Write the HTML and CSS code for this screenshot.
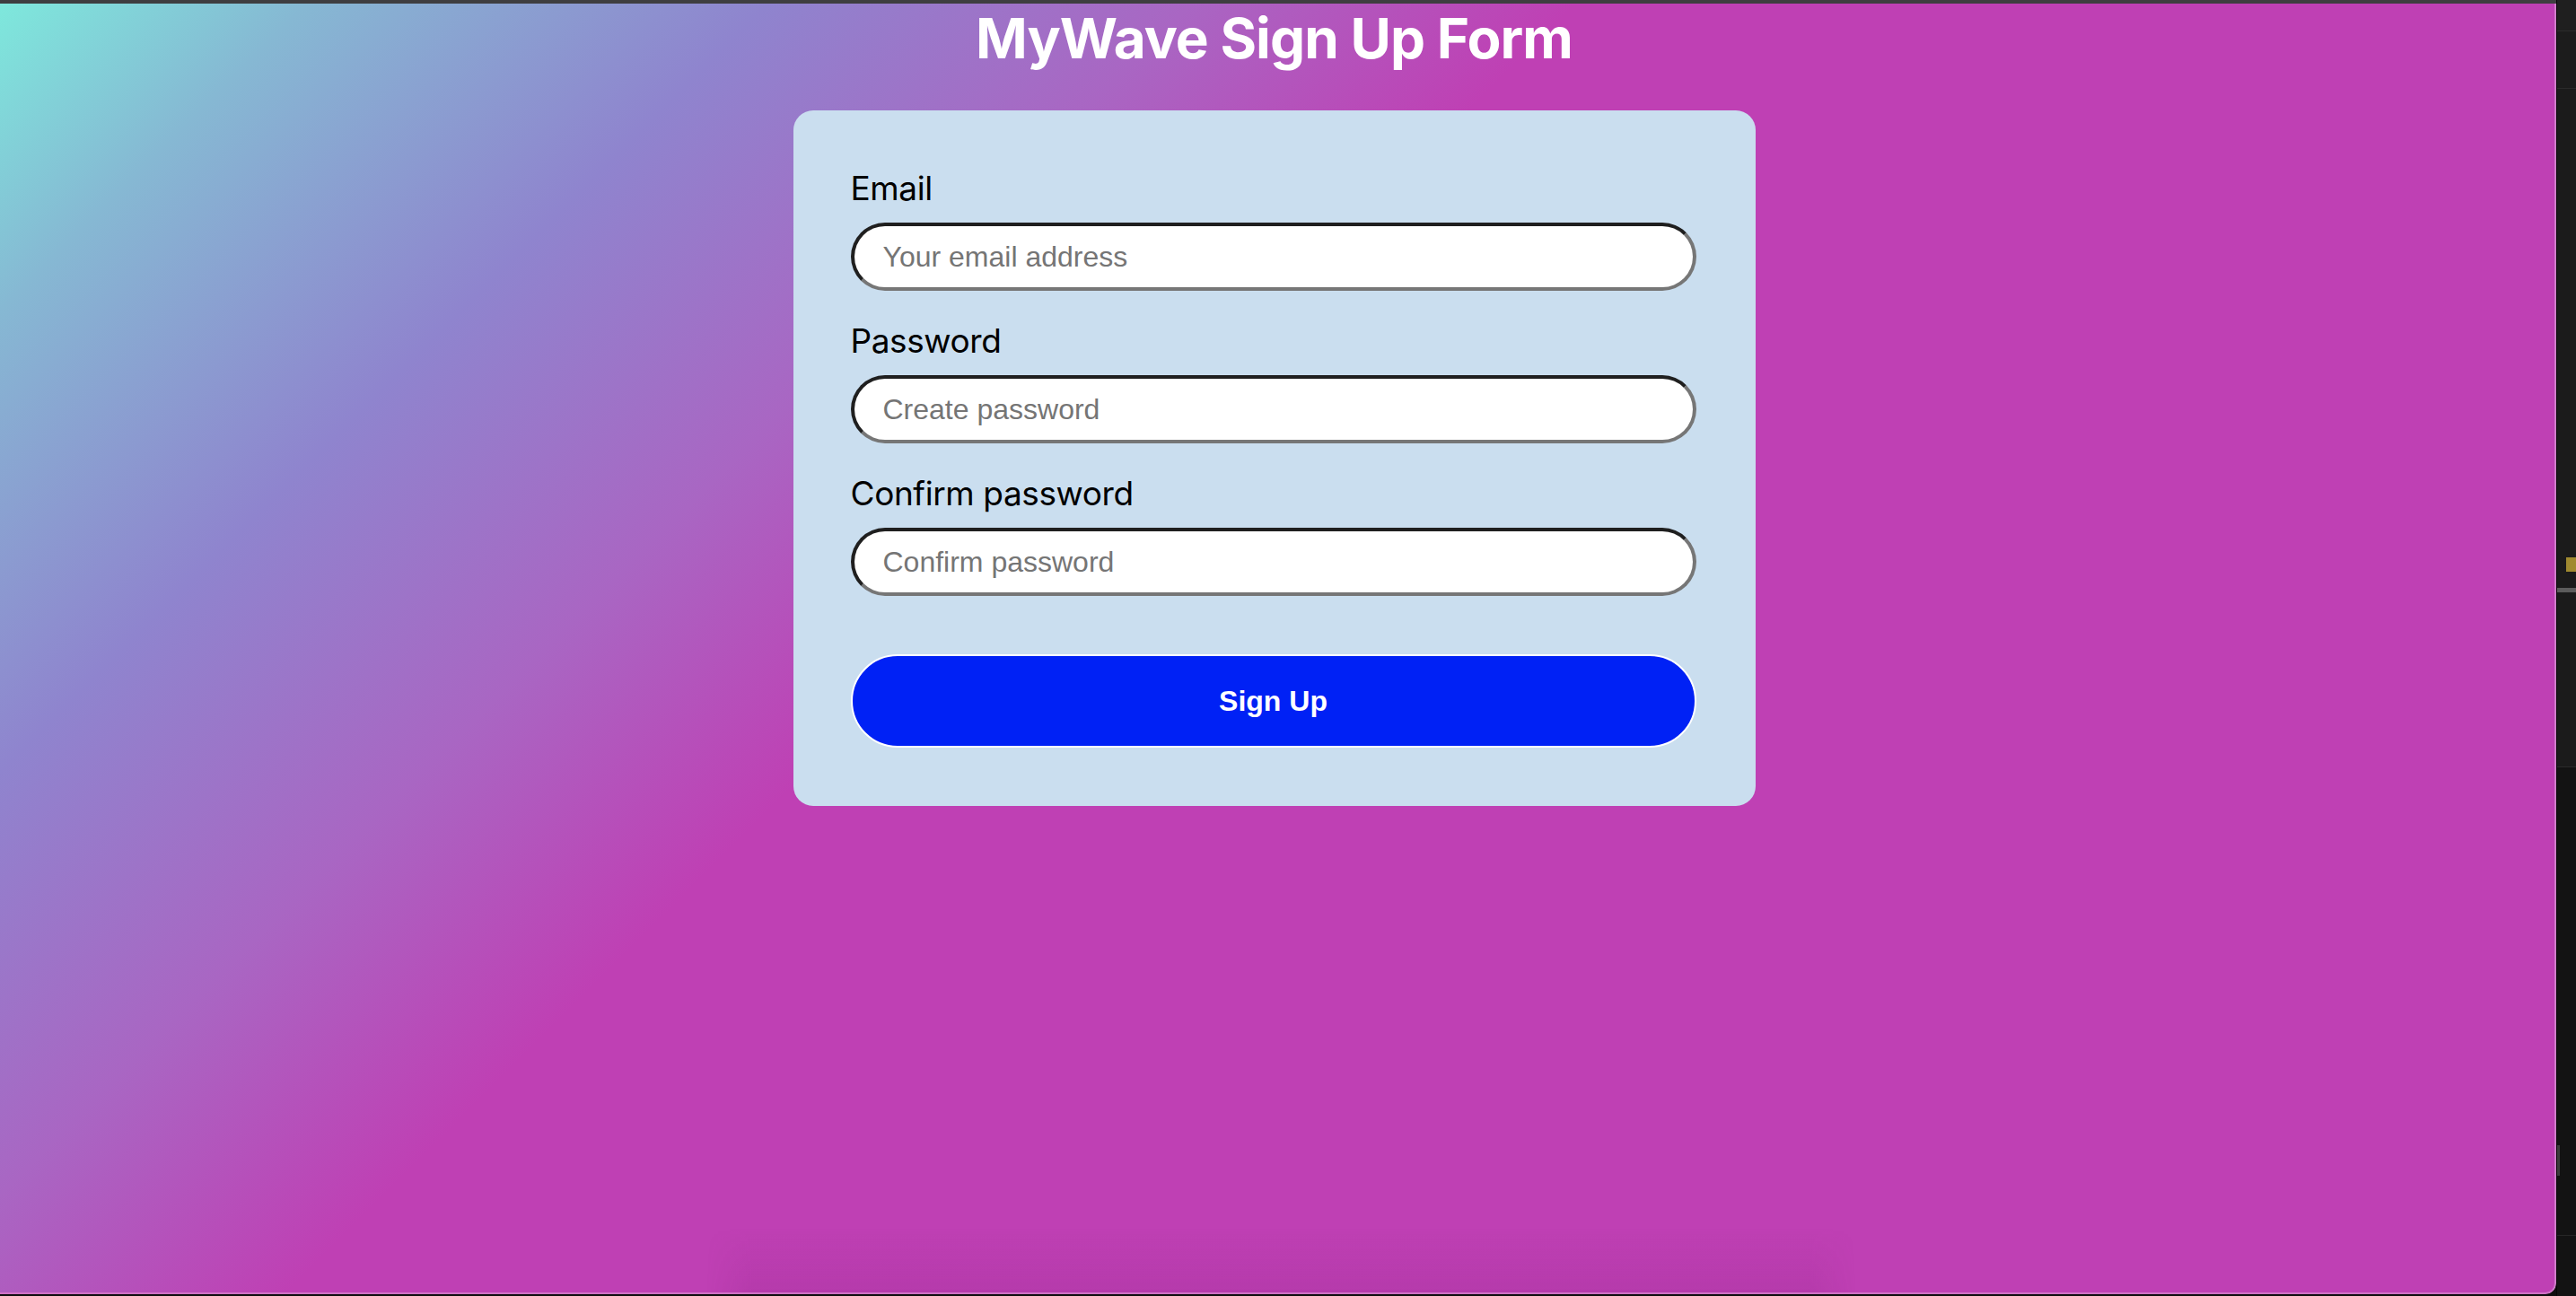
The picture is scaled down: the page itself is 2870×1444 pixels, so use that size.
FILE: index.html
```html
<!DOCTYPE html>
<html lang="en">
<head>
<meta charset="utf-8">
<title>MyWave Sign Up Form</title>
<link rel="stylesheet" href="styles.css">
</head>
<body>
<div class="screen">
  <div class="window">
    <div class="topbar"></div>
    <main class="page">
      <h1 class="title">MyWave Sign Up Form</h1>
      <form class="card">
        <label class="field-label" for="email">Email</label>
        <input class="field" id="email" type="email" placeholder="Your email address">
        <label class="field-label" for="password">Password</label>
        <input class="field" id="password" type="password" placeholder="Create password">
        <label class="field-label" for="confirm">Confirm password</label>
        <input class="field" id="confirm" type="password" placeholder="Confirm password">
        <button class="submit" type="submit">Sign Up</button>
      </form>
      <div class="dock-shadow"></div>
    </main>
  </div>
  <aside class="side">
    <div class="side-seg side-seg-a"></div>
    <div class="side-seg side-seg-b"></div>
    <div class="side-seg side-seg-c"><span class="side-marker"></span></div>
    <div class="side-rule"></div>
    <div class="side-seg side-seg-d"></div>
    <div class="side-seg side-seg-e"><span class="side-thumb"></span></div>
    <div class="side-seg side-seg-f"></div>
  </aside>
</div>
</body>
</html>
```

FILE: styles.css
```css
* { box-sizing: border-box; }

html, body {
  margin: 0;
  padding: 0;
}

body {
  width: 2870px;
  height: 1444px;
  overflow: hidden;
  background: #0e0e0e;
  font-family: "Inter", "Noto Sans", sans-serif;
}

.screen {
  display: flex;
  height: 1444px;
}

.window {
  width: 2848px;
  height: 1442px;
  display: flex;
  flex-direction: column;
  border-bottom-right-radius: 12px;
  overflow: hidden;
}

.topbar {
  height: 4px;
  background: #3e3e40;
  flex: none;
}

.page {
  position: relative;
  flex: 1;
  display: flex;
  flex-direction: column;
  align-items: center;
  padding: 1px 7px 0 0;
  background: linear-gradient(135deg, #7ee8dc 0%, #86b8d3 8%, #8f84ce 20%, #a966c3 31%, #bf40b4 41%, #bf40b4 100%);
  border-right: 2px solid #d27ccb;
  border-bottom: 2px solid #cf72c6;
  border-bottom-right-radius: 12px;
}

.title {
  margin: 0 0 42px;
  font-family: "Inter", sans-serif;
  font-weight: 700;
  font-size: 62px;
  line-height: 76px;
  color: #ffffff;
  letter-spacing: -0.95px;
}

.card {
  width: 1072px;
  padding: 64px 64px 65px;
  background: #cadeef;
  border-radius: 22px;
  display: flex;
  flex-direction: column;
}

.field-label {
  font-family: "Inter", sans-serif;
  font-size: 37px;
  line-height: 46px;
  letter-spacing: -0.4px;
  color: #000000;
  margin-bottom: 15px;
}

.field {
  width: 942px;
  height: 76px;
  margin: 0 0 33px;
  padding: 0 32px;
  border-style: solid;
  border-width: 4px;
  border-color: #1f1f1f #767676 #767676 #1f1f1f;
  border-radius: 38px;
  background: #ffffff;
  font-family: "Liberation Sans", Arial, sans-serif;
  font-size: 32px;
  color: #000;
  outline: none;
}

.field::placeholder {
  color: #757575;
}

.field:last-of-type {
  margin-bottom: 65px;
}

.submit {
  width: 942px;
  height: 104px;
  border: 2px solid #ffffff;
  border-radius: 52px;
  background: #0021f5;
  color: #ffffff;
  font-family: "Liberation Sans", Arial, sans-serif;
  font-weight: 700;
  font-size: 32px;
  cursor: pointer;
}

.dock-shadow {
  position: absolute;
  left: 787px;
  bottom: 0;
  width: 1281px;
  height: 72px;
  background: linear-gradient(to bottom, rgba(100, 10, 100, 0) 0%, rgba(100, 10, 100, 0.1) 100%);
  -webkit-mask-image: linear-gradient(to right, transparent 0%, #000 4%, #000 96%, transparent 100%);
  mask-image: linear-gradient(to right, transparent 0%, #000 4%, #000 96%, transparent 100%);
  pointer-events: none;
}

.side {
  width: 22px;
  height: 1444px;
  flex: none;
  display: flex;
  flex-direction: column;
  border-left: 1px solid #050505;
  background: #161616;
}

.side-seg { flex: none; }

.side-seg-a {
  height: 35px;
  background: #1f1f1f;
  border-bottom: 1px solid #2b2b2b;
}

.side-seg-b {
  height: 64px;
  background: #1c1c1c;
  border-bottom: 1px solid #2a2a2a;
}

.side-seg-c {
  height: 556px;
  background: #1b1b1b;
  display: flex;
  justify-content: flex-end;
  padding-top: 522px;
}

.side-marker {
  display: block;
  width: 11px;
  height: 16px;
  background: #a08a30;
}

.side-rule {
  height: 5px;
  background: #5c5c5c;
}

.side-seg-d {
  height: 195px;
  background: #1b1b1b;
  border-bottom: 1px solid #2a2a2a;
}

.side-seg-e {
  height: 522px;
  background: #131313;
  border-bottom: 1px solid #262626;
  padding-top: 421px;
}

.side-thumb {
  display: block;
  width: 3px;
  height: 34px;
  background: #3c3c3c;
}

.side-seg-f {
  flex: 1;
  background: #131313;
}
```
